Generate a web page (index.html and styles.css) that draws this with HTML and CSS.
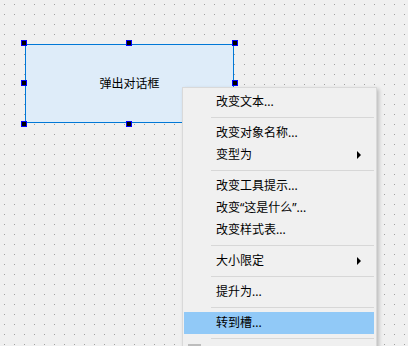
FILE: index.html
```html
<!DOCTYPE html>
<html lang="zh">
<head>
    <meta charset="UTF-8">
    <title>Form - Designer</title>
    <link rel="stylesheet" href="styles.css">
</head>
<body>

    <div class="canvas">
        <div class="widget">
            <span class="label">弹出对话框</span>
            <i class="handle h-tl"></i>
            <i class="handle h-tc"></i>
            <i class="handle h-tr"></i>
            <i class="handle h-ml"></i>
            <i class="handle h-mr"></i>
            <i class="handle h-bl"></i>
            <i class="handle h-bc"></i>
            <i class="handle h-br"></i>
        </div>

        <div class="menu">
            <div class="item">改变文本...</div>
            <div class="sep"></div>
            <div class="item">改变对象名称...</div>
            <div class="item sub">变型为</div>
            <div class="sep"></div>
            <div class="item">改变工具提示...</div>
            <div class="item">改变“这是什么”...</div>
            <div class="item">改变样式表...</div>
            <div class="sep"></div>
            <div class="item sub">大小限定</div>
            <div class="sep"></div>
            <div class="item">提升为...</div>
            <div class="sep"></div>
            <div class="item active">转到槽...</div>
            <div class="sep"></div>
            <div class="item"><span class="icon"></span></div>
        </div>
    </div>

</body>
</html>
```

FILE: styles.css
```css
html, body {
    margin: 0;
    padding: 0;
    height: 100%;
    overflow: hidden;
}

body {
    font-family: "Noto Sans", "Noto Sans CJK SC", sans-serif;
    font-size: 12px;
    color: #000;
    background-color: #f0f0f0;
}

/* designer grid: one grey dot every 10px */
.canvas {
    position: relative;
    width: 408px;
    height: 346px;
    overflow: hidden;
    background-image:
        linear-gradient(90deg, #f0f0f0 9px, transparent 9px),
        linear-gradient(#f0f0f0 9px, #a0a0a0 9px);
    background-size: 10px 10px;
    background-position: -5px -5px;
}

.widget {
    position: absolute;
    left: 25px;
    top: 44px;
    width: 207px;
    height: 77px;
    border: 1px solid #0078d7;
    background: #deecf9;
    display: flex;
    align-items: center;
    justify-content: center;
}

.label {
    line-height: 14px;
    margin-top: 1px;
}

.handle {
    position: absolute;
    width: 4px;
    height: 4px;
    background: #000;
    border: 1px solid #0000ff;
}

.h-tl { left: -5px; top: -5px; }
.h-tc { left: 100px; top: -5px; }
.h-tr { right: -5px; top: -5px; }
.h-ml { left: -5px; top: 35px; }
.h-mr { right: -5px; top: 35px; }
.h-bl { left: -5px; bottom: -5px; }
.h-bc { left: 100px; bottom: -5px; }
.h-br { right: -5px; bottom: -5px; }

.menu {
    position: absolute;
    left: 182px;
    top: 87px;
    width: 193px;
    height: 258px;
    padding-top: 3px;
    overflow: hidden;
    background: #f0f0f0;
    border: 1px solid #d9d9d9;
    box-shadow: 2px 2px 4px rgba(0, 0, 0, 0.22);
    display: flex;
    flex-direction: column;
}

.item {
    position: relative;
    flex: none;
    height: 22px;
    line-height: 22px;
    padding-left: 32px;
    margin: 0 2px 0 1px;
    white-space: nowrap;
}

.item.active {
    background: #91c9f7;
}

.sub::after {
    content: "";
    position: absolute;
    right: 13px;
    top: 7px;
    border-left: 4px solid #000;
    border-top: 4px solid transparent;
    border-bottom: 4px solid transparent;
}

.sep {
    flex: none;
    height: 9px;
    margin: 0 2px 0 28px;
    display: flex;
    align-items: center;
}

.sep::before {
    content: "";
    flex: 1;
    height: 1px;
    background: #d7d7d7;
}

.icon {
    position: absolute;
    left: 4px;
    top: 1px;
    width: 13px;
    height: 13px;
    background: #bdbdbd;
}
```
